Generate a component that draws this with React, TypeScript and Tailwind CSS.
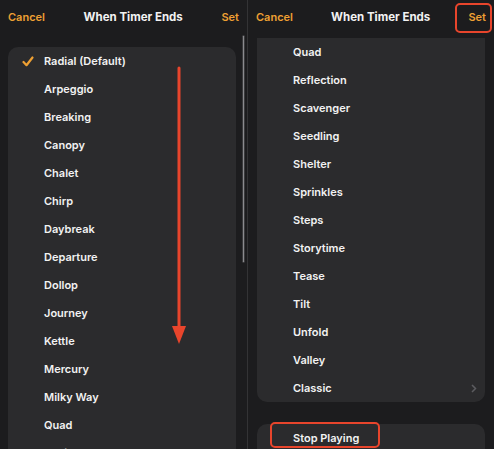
import React from 'react';

const leftItems = [
    'Radial (Default)',
    'Arpeggio',
    'Breaking',
    'Canopy',
    'Chalet',
    'Chirp',
    'Daybreak',
    'Departure',
    'Dollop',
    'Journey',
    'Kettle',
    'Mercury',
    'Milky Way',
    'Quad',
    'Radiate',
];

const rightItems = [
    'Quad',
    'Reflection',
    'Scavenger',
    'Seedling',
    'Shelter',
    'Sprinkles',
    'Steps',
    'Storytime',
    'Tease',
    'Tilt',
    'Unfold',
    'Valley',
    'Classic',
];

function Header() {
    return (
        <div className="h-[35px] shrink-0 flex items-center justify-between px-2 font-semibold">
            <span className="text-[11px] text-[#eea033]">Cancel</span>
            <span className="text-[11.5px] font-bold text-[#f2f2f2]">When Timer Ends</span>
            <span className="text-[11px] text-[#eea033]">Set</span>
        </div>
    );
}

function Check() {
    return (
        <svg width="12" height="11" viewBox="0 0 12 11" fill="none">
            <path d="M1.5 6 L4.5 9.2 L10.5 1.5" stroke="#eea033" strokeWidth="2.2" strokeLinecap="round" strokeLinejoin="round" />
        </svg>
    );
}

function Row(props: { label: string; checked?: boolean; chevron?: boolean }) {
    return (
        <div className="h-7 flex items-center">
            <div className="w-9 flex justify-center pl-1">{props.checked && <Check />}</div>
            <span className="flex-1 text-[11px] font-semibold text-[#f2f2f2]">{props.label}</span>
            {props.chevron && (
                <svg width="6" height="9" viewBox="0 0 6 9" className="mr-[8px]">
                    <path d="M1 1 L4.5 4.5 L1 8" stroke="#5c5c60" strokeWidth="1.5" fill="none" />
                </svg>
            )}
        </div>
    );
}

export default function App() {
    return (
        <div
            className="w-[494px] h-[449px] overflow-hidden flex bg-[#1c1c1e]"
            style={{ fontFamily: 'Inter, "Open Sans", sans-serif' }}
        >
            <div className="relative w-[247px] shrink-0 flex flex-col bg-[#1c1c1e]">
                <Header />
                <div className="mt-3 ml-2 mr-[11px] rounded-t-[10px] bg-[#2b2b2d]">
                    {leftItems.map((item, i) => (
                        <Row key={item} label={item} checked={i === 0} />
                    ))}
                </div>
                <div className="absolute left-[242px] top-[35px] w-[3px] h-[228px] rounded-full bg-[#8a8a8e] border border-[#3a3a3c]" />
                <svg className="absolute left-[170px] top-[66px]" width="18" height="280" viewBox="0 0 18 280">
                    <line x1="9" y1="2" x2="9" y2="262" stroke="#e8452c" strokeWidth="3" strokeLinecap="round" />
                    <path d="M2 260 L16 260 L9 278 Z" fill="#e8452c" />
                </svg>
            </div>
            <div className="w-px shrink-0 bg-[#333335]" />
            <div className="relative flex-1 flex flex-col">
                <Header />
                <div className="mt-[3px] mx-[9px] rounded-b-[10px] bg-[#2b2b2d]">
                    {rightItems.map((item) => (
                        <Row key={item} label={item} chevron={item === 'Classic'} />
                    ))}
                </div>
                <div className="mt-[22px] mx-[9px] rounded-t-[10px] bg-[#2b2b2d]">
                    <Row label="Stop Playing" />
                </div>
                <div className="absolute left-[207px] top-[3px] w-[37px] h-[30px] rounded-[5px] border-[2.5px] border-[#e8452c]" />
                <div className="absolute left-[22px] top-[422px] w-[110px] h-[26px] rounded-[5px] border-[2.5px] border-[#e8452c]" />
            </div>
        </div>
    );
}
